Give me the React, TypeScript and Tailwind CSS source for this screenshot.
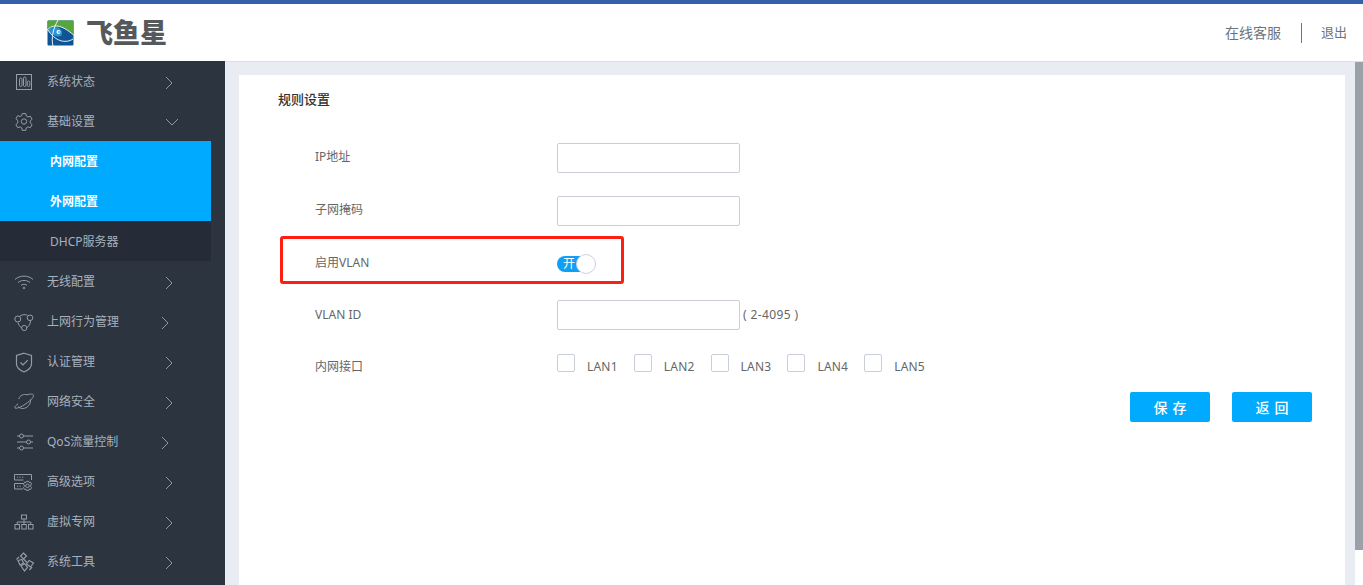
import type { ReactNode } from 'react';

const iconProps = {
  fill: 'none',
  stroke: '#939ca8',
  strokeWidth: 1,
};

// Sidebar icons
function StatusIcon() {
  return (
    <svg width="18" height="18" viewBox="0 0 18 18" {...iconProps}>
      <rect x="1.500" y="1.500" width="15" height="15" />
      <rect x="4.500" y="5" width="2.500" height="8.500" rx="1.200" />
      <rect x="8.500" y="4" width="2.500" height="9.500" rx="1.200" />
      <rect x="12.300" y="8" width="2.500" height="5.500" rx="1.200" />
    </svg>
  );
}

function GearIcon() {
  return (
    <svg width="20" height="20" viewBox="0 0 20 20" {...iconProps}>
      <path d="M8.200 1.600h3.600l.5 2.500 1.600.9 2.400-.8 1.800 3.100-1.900 1.700v1.900l1.900 1.700-1.800 3.100-2.400-.8-1.600.9-.5 2.500H8.200l-.5-2.500-1.600-.9-2.400.8-1.800-3.100 1.900-1.700V8.500L1.900 6.800l1.800-3.100 2.400.8 1.600-.9z" />
      <circle cx="10" cy="9.500" r="2.700" />
    </svg>
  );
}

function WifiIcon() {
  return (
    <svg width="20" height="16" viewBox="0 0 20 16" {...iconProps}>
      <path d="M1 5.500C5.500 1 14.500 1 19 5.500" />
      <path d="M4 8.500C7 5.800 13 5.800 16 8.500" />
      <path d="M7 11.300C8.500 10 11.500 10 13 11.300" />
      <circle cx="10" cy="14" r="0.800" />
    </svg>
  );
}

function BehaviorIcon() {
  return (
    <svg width="20" height="18" viewBox="0 0 20 18" {...iconProps}>
      <path d="M6 3C9 1.300 11 1.300 13.500 2.300" />
      <path d="M4 9.500C4.500 11.500 5.500 13.500 7.500 14.800" />
      <path d="M13 14.500C15 13.300 16.300 11 16.500 8" />
      <circle cx="3.800" cy="6" r="3" />
      <circle cx="16" cy="4.800" r="2.800" />
      <circle cx="10.200" cy="15" r="2.600" />
    </svg>
  );
}

function ShieldIcon() {
  return (
    <svg width="18" height="21" viewBox="0 0 18 21" {...iconProps} strokeWidth={1.200}>
      <path d="M9 1.200 16.500 3.500V12C16.500 16 12.500 18.500 9 20 5.500 18.500 1.500 16 1.500 12V3.500z" />
      <path d="M5.500 10.500 8 13 12.800 8.200" />
    </svg>
  );
}

function PlanetIcon() {
  return (
    <svg width="20" height="18" viewBox="0 0 20 18" {...iconProps}>
      <path d="M4.800 6C6 2 10 .8 13 1.800" />
      <path d="M16.500 6.500C17 11 13.500 15.500 8.500 15.500 6.500 15.500 5 14.500 4.500 13.500" />
      <path d="M13 1.800C16 .8 19.500.8 19.500 2.300 19.800 4.500 15 9 10 12 5.500 14.800 1.200 16 .8 14.800.5 14 1.800 12.500 4.200 10.800" />
    </svg>
  );
}

function SlidersIcon() {
  return (
    <svg className="ml-[2px]" width="18" height="18" viewBox="0 0 18 18" {...iconProps}>
      <path d="M1 3h2.500M7.500 3H17M1 9h9.500M14.500 9H17M1 15h2.500M7.500 15H17" />
      <circle cx="5.500" cy="3" r="2" />
      <circle cx="12.500" cy="9" r="2" />
      <circle cx="5.500" cy="15" r="2" />
    </svg>
  );
}

function AdvancedIcon() {
  return (
    <svg className="-ml-[1px]" width="20" height="18" viewBox="0 0 20 18" {...iconProps}>
      <path d="M18.500 7V1.500H1.500V7H10.500" />
      <path d="M10 10.500H1.500V16H10" />
      <path d="M4 4.200h1.200M6.500 4.200h1.200M9 4.200h1.200M4 13.200h1.200M6.500 13.200h1.200" />
      <circle cx="14.500" cy="12.800" r="1.800" />
      <path d="M13.300 8.300h2.400l.4 1.200 1.300-.4 1.200 2-.9 1v1.400l.9 1-1.200 2-1.300-.4-.4 1.200h-2.400l-.4-1.200-1.300.4-1.200-2 .9-1v-1.400l-.9-1 1.200-2 1.300.4z" />
    </svg>
  );
}

function TreeIcon() {
  return (
    <svg width="20" height="16" viewBox="0 0 20 16" {...iconProps}>
      <rect x="7.500" y="1" width="5" height="4" />
      <rect x="1" y="10.500" width="4.500" height="4.500" />
      <rect x="7.800" y="10.500" width="4.500" height="4.500" />
      <rect x="14.500" y="10.500" width="4.500" height="4.500" />
      <path d="M10 5V10.500M3.200 10.500V8H16.800V10.500" />
    </svg>
  );
}

function ToolsIcon() {
  return (
    <svg className="ml-[2px]" width="20" height="20" viewBox="0 0 20 20" {...iconProps} strokeWidth={1.200}>
      <path d="M8.500 1 11.500 4 8.500 7 5.500 4z" />
      <path d="M1.500 7.500 4 5M8.500 7 12 10.500" />
      <path d="M3 8.500 7 7.500 8.500 11 5 13z" />
      <path d="M11.500 12 14 8.500 18.500 11 15.500 15z" />
      <path d="M6 14 9.500 11.500 12.500 15.500 9.500 19z" />
      <path d="M17 15 14.500 18" />
    </svg>
  );
}

function Chevron({ open = false, shift = false }: { open?: boolean; shift?: boolean }) {
  if (open) {
    return (
      <svg className="absolute left-[165px] top-[17px]" width="14" height="8" viewBox="0 0 14 8" fill="none" stroke="#8d96a3">
        <path d="M1 1l6 6 6-6" />
      </svg>
    );
  }
  return (
    <svg className={shift ? 'absolute left-[161px] top-[15px]' : 'absolute left-[165px] top-[15px]'} width="8" height="14" viewBox="0 0 8 14" fill="none" stroke="#8d96a3">
      <path d="M1 1l6 6-6 6" />
    </svg>
  );
}

interface MenuRowProps {
  icon: ReactNode;
  label: string;
  open?: boolean;
  shift?: boolean;
}

function MenuRow({ icon, label, open, shift }: MenuRowProps) {
  return (
    <div className="relative flex h-10 items-center pt-[2px] text-[12px] text-[#a7b1be]">
      <span className="flex w-[47px] shrink-0 justify-center">{icon}</span>
      <span>{label}</span>
      <Chevron open={open} shift={shift} />
    </div>
  );
}

function SubRow({ label, active }: { label: string; active?: boolean }) {
  return (
    <div
      className={
        active
          ? 'flex h-10 w-[211px] items-center bg-[#00aaff] pl-[50px] pt-[2px] text-[12px] font-bold text-white'
          : 'flex h-10 w-[211px] items-center bg-[#262c37] pl-[50px] pt-[2px] text-[12px] text-[#a7b1be]'
      }
    >
      {label}
    </div>
  );
}

function Sidebar() {
  return (
    <aside className="-mt-px h-[calc(100%+1px)] w-[225px] shrink-0 overflow-hidden bg-[#2c3440]">
      <MenuRow icon={<StatusIcon />} label="系统状态" />
      <MenuRow icon={<GearIcon />} label="基础设置" open />
      <SubRow label="内网配置" active />
      <SubRow label="外网配置" active />
      <SubRow label="DHCP服务器" />
      <MenuRow icon={<WifiIcon />} label="无线配置" />
      <MenuRow icon={<BehaviorIcon />} label="上网行为管理" shift />
      <MenuRow icon={<ShieldIcon />} label="认证管理" />
      <MenuRow icon={<PlanetIcon />} label="网络安全" />
      <MenuRow icon={<SlidersIcon />} label="QoS流量控制" shift />
      <MenuRow icon={<AdvancedIcon />} label="高级选项" />
      <MenuRow icon={<TreeIcon />} label="虚拟专网" />
      <MenuRow icon={<ToolsIcon />} label="系统工具" />
    </aside>
  );
}

function Logo() {
  return (
    <svg width="27" height="26" viewBox="0 0 27 26">
      <rect x="0.500" y="0.500" width="26" height="25" rx="1" fill="#0d5596" />
      <path d="M.5 9V1.500A1 1 0 0 1 1.500.5H26.500V15C20 8 8 3 .5 9z" fill="#55a63c" />
      <path d="M.5 10C5 6.500 9 6.500 12.500 8 15 10 15.500 13 14.500 15.500 10 18 5 15 .5 10z" fill="#2a93d4" />
      <path d="M0 10C6 4 14 4 26.500 15M11 0C6 9 4 18 6 26M26 19C18 24 8 21 1 10" fill="none" stroke="#ffffff" strokeWidth="0.900" />
      <circle cx="11.500" cy="12" r="2" fill="#ffffff" />
      <circle cx="12" cy="12" r="0.900" fill="#27a6e6" />
    </svg>
  );
}

function Field({ label, suffix, lift }: { label: string; suffix?: string; lift?: boolean }) {
  return (
    <div className="flex h-[30px] items-center pl-[76px]">
      <span className={lift ? 'mb-[2px] w-[242px] shrink-0 text-[12px] text-[#666666]' : 'w-[242px] shrink-0 text-[12px] text-[#666666]'}>{label}</span>
      <div className="h-[30px] w-[183px] rounded-[2px] border border-[#c9ced8] bg-white" />
      {suffix && <span className="ml-[3px] text-[12px] tracking-[0.4px] text-[#666666]">{suffix}</span>}
    </div>
  );
}

export default function App() {
  return (
    <div className="flex h-[585px] w-[1363px] flex-col overflow-hidden bg-white font-['Noto_Sans','Noto_Sans_CJK_SC',sans-serif]">
      <header className="flex h-[62px] shrink-0 items-center border-b border-[#dcdfe5] border-t-4 border-t-[#3560ab] bg-white pl-[47px] pr-[16px]">
        <Logo />
        <span className="ml-[12px] text-[27px] leading-none font-black text-[#55595c]">飞鱼星</span>
        <span className="ml-auto text-[14px] text-[#6a7480]">在线客服</span>
        <span className="ml-[20px] mr-[19px] h-5 w-px bg-[#6a7480]" />
        <span className="text-[13px] text-[#6a7480]">退出</span>
      </header>

      <div className="flex min-h-0 flex-1">
        <Sidebar />

        <main className="min-w-0 flex-1 bg-[#e9ecf2] pl-[14px] pr-[10px] pt-[13px]">
          <div className="h-full bg-white pt-[15px]">
            <h2 className="pl-[39px] text-[13px] font-medium leading-[18px] text-[#333333]">规则设置</h2>

            <div className="mt-[35px] flex flex-col">
              <Field label="IP地址" lift />
              <div className="h-[23px]" />
              <Field label="子网掩码" lift />

              {/* Highlighted row */}
              <div className="ml-[41px] mt-[10px] flex h-[48px] w-[344px] items-center rounded-[3px] border-[3px] border-[#fb1f11] pl-[32px] pt-[6px]">
                <span className="w-[242px] shrink-0 text-[12px] text-[#666666]">启用VLAN</span>
                <div className="relative mt-[2px] flex h-[16px] w-[36px] items-center rounded-full bg-[#0fa0f5] pl-[6px] text-[12px] leading-none text-white">
                  开
                  <span className="absolute -right-[3px] -top-[2px] h-[20px] w-[20px] rounded-full border border-[#c9d2e4] bg-white" />
                </div>
              </div>

              <div className="h-[16px]" />
              <Field label="VLAN ID" suffix="( 2-4095 )" />

              <div className="mt-[24px] flex h-[18px] items-center pl-[76px]">
                <span className="mt-[8px] w-[242px] shrink-0 text-[12px] text-[#666666]">内网接口</span>
                {['LAN1', 'LAN2', 'LAN3', 'LAN4', 'LAN5'].map((lan) => (
                  <label key={lan} className="flex w-[76.800px] items-center">
                    <span className="h-[18px] w-[18px] rounded-[2px] border border-[#c9ced8]" />
                    <span className="mt-[8px] ml-[12px] text-[12px] tracking-[0.2px] text-[#666666]">{lan}</span>
                  </label>
                ))}
              </div>

              <div className="mt-[20px] flex justify-end gap-[22px] pr-[33px]">
                <button className="h-[30px] w-[80px] rounded-[2px] bg-[#00aaff] pl-[5px] text-[14px] font-medium tracking-[5px] text-white">保存</button>
                <button className="h-[30px] w-[80px] rounded-[2px] bg-[#00aaff] pl-[5px] text-[14px] font-medium tracking-[5px] text-white">返回</button>
              </div>
            </div>
          </div>
        </main>

        {/* Scrollbar */}
        <div className="flex w-[8px] shrink-0 flex-col bg-white">
          <div className="h-[488px] bg-[#9aa1a8]" />
        </div>
      </div>
    </div>
  );
}
